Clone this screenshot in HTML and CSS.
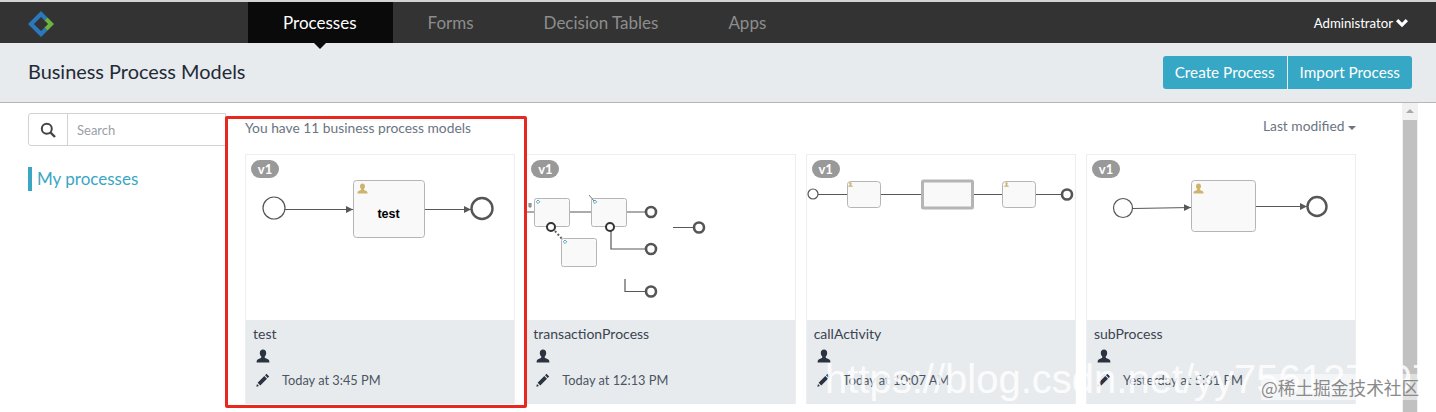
FILE: index.html
```html
<!DOCTYPE html>
<html lang="en">
<head>
    <meta charset="UTF-8">
    <meta name="viewport" content="width=device-width, initial-scale=1.0">
    <title>Business Process Models</title>
    <link rel="stylesheet" href="styles.css">
</head>
<body>

    <svg class="defs" width="0" height="0">
        <defs>
            <symbol id="person" viewBox="0 0 14 14">
                <path d="M7 .6c2 0 3.2 1.5 3.2 3.5 0 1.400-.6 2.700-1.400 3.500-.3.4-.2 1 .3 1.300 1.500.7 3.300 1.200 3.900 2.300.3.600.4 1.300.4 2.200H.6c0-.9.1-1.600.4-2.200.6-1.100 2.400-1.600 3.900-2.300.5-.3.6-.9.3-1.300C4.400 6.800 3.800 5.500 3.800 4.100 3.800 2.100 5 .6 7 .6z"/>
            </symbol>
            <symbol id="pencil" viewBox="0 0 14 14">
                <path d="M10.500.8l2.700 2.700-1.500 1.500L9 2.300zM8.300 3l2.700 2.700-6.700 6.700-2.700-2.700zM1 11l2 2-2.700.7z"/>
            </symbol>
            <marker id="arrow" markerWidth="8" markerHeight="8" refX="7" refY="4" orient="auto" markerUnits="userSpaceOnUse">
                <path d="M0 .5L7 4 0 7.500z" fill="#585858"/>
            </marker>
        </defs>
    </svg>

    <nav class="navbar">
        <svg class="logo" width="26" height="26" viewBox="3 3 22 22">
            <path d="M14 3L3 14l11 11 5.500-5.500-2.500-2.500-3 3-6-6 6-6 3 3 2.500-2.500z" fill="#2b78bd"/>
            <path d="M19.500 8.500l-2.500 2.500 3 3-3 3 2.500 2.500 5.500-5.500z" fill="#6cb33f"/>
        </svg>
        <ul class="nav-list">
            <li class="nav-item active">Processes</li>
            <li class="nav-item">Forms</li>
            <li class="nav-item">Decision Tables</li>
            <li class="nav-item">Apps</li>
        </ul>
        <div class="user-menu">
            Administrator
            <svg width="12" height="10" viewBox="0 0 12 10"><path d="M0 3.200L2.300 1 6 4.700 9.700 1 12 3.200 6 9.200z" fill="#fff"/></svg>
        </div>
    </nav>

    <header class="subheader">
        <h1>Business Process Models</h1>
        <div class="btn-group">
            <button class="btn">Create Process</button>
            <button class="btn">Import Process</button>
        </div>
    </header>

    <div class="content">
        <aside class="sidebar">
            <div class="search-box">
                <span class="search-icon">
                    <svg width="16" height="16" viewBox="0 0 16 16"><circle cx="6.800" cy="6.800" r="5" fill="none" stroke="#444" stroke-width="2"/><path d="M10.500 10.500L15 15" stroke="#444" stroke-width="2.400"/></svg>
                </span>
                <input type="text" placeholder="Search">
            </div>
            <div class="side-link">My processes</div>
        </aside>

        <main class="main">
            <div class="toolbar">
                <span class="count">You have 11 business process models</span>
                <span class="sort">Last modified <i class="caret"></i></span>
            </div>
            <div class="cards">

                <div class="card">
                    <span class="badge">v1</span>
                    <svg class="thumb" viewBox="246 155 269 165">
                        <circle class="start" cx="274" cy="208" r="11"/>
                        <path class="flow" d="M285 209.500H353" marker-end="url(#arrow)"/>
                        <rect class="task" x="353.500" y="180.500" width="71" height="57" rx="3"/>
                        <use href="#person" class="task-user" x="357" y="183" width="11" height="11"/>
                        <text class="task-label" x="388.500" y="218">test</text>
                        <path class="flow" d="M425 209.500H471" marker-end="url(#arrow)"/>
                        <circle class="end" cx="482" cy="208.500" r="10.500"/>
                    </svg>
                    <div class="card-info">
                        <div class="card-name">test</div>
                        <svg class="info-icon"><use href="#person"/></svg>
                        <div class="card-date">
                            <svg class="info-icon"><use href="#pencil"/></svg>
                            <span>Today at 3:45 PM</span>
                        </div>
                    </div>
                </div>

                <div class="card">
                    <span class="badge">v1</span>
                    <svg class="thumb" viewBox="526 155 269 165">
                        <path class="flow" d="M526 212H534M570 212H592M627 212H646M611 228V249H646M673 227.500H694M625 279V291.500H646"/>
                        <path class="dots" d="M555 231L563 240"/>
                        <rect class="task" x="534.500" y="198.500" width="35" height="28" rx="2"/>
                        <rect class="task" x="591.500" y="198.500" width="35" height="28" rx="2"/>
                        <rect class="task" x="561.500" y="238.500" width="35" height="28" rx="2"/>
                        <path class="gear" d="M538 200l1.800 1.800-1.800 1.800-1.800-1.800zM595 200l1.800 1.800-1.800 1.800-1.800-1.800zM565 240l1.800 1.800-1.800 1.800-1.800-1.800z"/>
                        <path class="mark" d="M589 195l5 6M528 204h4M528 206h4M530 203v5"/>
                        <circle class="boundary" cx="551" cy="227" r="4"/>
                        <circle class="boundary" cx="610" cy="227" r="4"/>
                        <circle class="end small" cx="651" cy="212" r="5"/>
                        <circle class="end small" cx="651" cy="249" r="5"/>
                        <circle class="end small" cx="651" cy="291.500" r="5"/>
                        <circle class="end small" cx="699" cy="227.500" r="5"/>
                    </svg>
                    <div class="card-info">
                        <div class="card-name">transactionProcess</div>
                        <svg class="info-icon"><use href="#person"/></svg>
                        <div class="card-date">
                            <svg class="info-icon"><use href="#pencil"/></svg>
                            <span>Today at 12:13 PM</span>
                        </div>
                    </div>
                </div>

                <div class="card">
                    <span class="badge">v1</span>
                    <svg class="thumb" viewBox="806 155 269 165">
                        <circle class="start" cx="812" cy="194" r="5"/>
                        <path class="flow" d="M817 194.500H846M880 194.500H921M972 194.500H1001M1035 194.500H1061"/>
                        <rect class="task" x="846.500" y="181.500" width="33" height="26" rx="3"/>
                        <rect class="task thick" x="921.500" y="181" width="50" height="27" rx="1"/>
                        <rect class="task" x="1001.500" y="181.500" width="33" height="26" rx="3"/>
                        <use href="#person" class="task-user" x="847" y="182" width="5" height="5"/>
                        <use href="#person" class="task-user" x="1003" y="182" width="5" height="5"/>
                        <circle class="end small" cx="1066" cy="194.500" r="5"/>
                    </svg>
                    <div class="card-info">
                        <div class="card-name">callActivity</div>
                        <svg class="info-icon"><use href="#person"/></svg>
                        <div class="card-date">
                            <svg class="info-icon"><use href="#pencil"/></svg>
                            <span>Today at 10:07 AM</span>
                        </div>
                    </div>
                </div>

                <div class="card">
                    <span class="badge">v1</span>
                    <svg class="thumb" viewBox="1086 155 269 165">
                        <circle class="start" cx="1122" cy="208" r="9.500"/>
                        <path class="flow" d="M1132 208.500L1190 207.500" marker-end="url(#arrow)"/>
                        <rect class="task" x="1190.500" y="180.500" width="64" height="51" rx="3"/>
                        <use href="#person" class="task-user" x="1192" y="183" width="11" height="11"/>
                        <path class="flow" d="M1255 206.500H1306" marker-end="url(#arrow)"/>
                        <circle class="end" cx="1316" cy="206.500" r="9.500"/>
                    </svg>
                    <div class="card-info">
                        <div class="card-name">subProcess</div>
                        <svg class="info-icon"><use href="#person"/></svg>
                        <div class="card-date">
                            <svg class="info-icon"><use href="#pencil"/></svg>
                            <span>Yesterday at 5:31 PM</span>
                        </div>
                    </div>
                </div>

            </div>
        </main>

        <div class="scrollbar">
            <i class="scroll-up"></i>
            <div class="scroll-thumb"></div>
        </div>
    </div>

    <!-- annotation and watermarks lying over the screenshot -->
    <div class="red-box"></div>
    <div class="watermark">https://blog.csdn.net/yy756127197</div>
    <div class="watermark-cn">@稀土掘金技术社区</div>

</body>
</html>
```

FILE: styles.css
```css
html, body {
    height: 412px;
    overflow: hidden;
}
body {
    font-family: Lato, "Noto Sans", sans-serif;
    margin: 0;
    padding: 0;
    background-color: #fff;
    color: #3a4450;
    position: relative;
}
.defs {
    position: absolute;
}
.navbar {
    display: flex;
    align-items: center;
    height: 41px;
    border-top: 2px solid #d4d4d4;
    background-color: #333;
}
.logo {
    margin: 3px 194px 0 28px;
}
.nav-list {
    display: flex;
    margin: 0;
    padding: 0;
    list-style: none;
}
.nav-item {
    position: relative;
    padding: 0 35px;
    line-height: 41px;
    font-size: 17px;
    color: #8d8d8d;
}
.nav-item.active {
    padding-right: 36px;
    background-color: #0a0a0a;
    color: #fff;
}
.nav-item.active::after {
    content: "";
    position: absolute;
    left: 50%;
    top: 100%;
    margin-left: -6px;
    border: 6px solid transparent;
    border-bottom: 0;
    border-top-color: #0a0a0a;
}
.user-menu {
    margin-left: auto;
    margin-right: 28px;
    display: flex;
    align-items: center;
    gap: 3px;
    font-size: 13.2px;
    color: #fff;
}
.subheader {
    display: flex;
    align-items: center;
    justify-content: space-between;
    box-sizing: border-box;
    height: 60px;
    padding: 0 24px 1px 28px;
    background-color: #e8ebee;
    border-bottom: 1px solid #b4b7ba;
}
h1 {
    margin: 0 0 2px;
    font-size: 19.9px;
    font-weight: 400;
    color: #1f2a36;
}
.btn-group {
    display: flex;
    gap: 1px;
}
.btn {
    height: 33px;
    padding: 0 12px;
    border: none;
    background-color: #36a7c4;
    color: #fff;
    font-family: inherit;
    font-size: 15.3px;
}
.btn:first-child {
    border-radius: 3px 0 0 3px;
}
.btn:last-child {
    border-radius: 0 3px 3px 0;
}
.content {
    display: flex;
}
.sidebar {
    box-sizing: border-box;
    width: 245px;
    padding: 10px 19px 0 28px;
}
.search-box {
    display: flex;
    height: 33px;
    box-sizing: border-box;
    border: 1px solid #d0d3d6;
    border-radius: 3px 0 0 3px;
}
.search-icon {
    display: flex;
    align-items: center;
    justify-content: center;
    flex: 0 0 38px;
    border-right: 1px solid #d0d3d6;
}
.search-box input {
    width: 100%;
    min-width: 0;
    padding: 0 9px;
    border: none;
    outline: none;
    font-family: inherit;
    font-size: 13px;
}
.search-box input::placeholder {
    color: #9a9fa5;
}
.side-link {
    margin-top: 21px;
    padding-left: 5px;
    border-left: 4px solid #3ba6c4;
    line-height: 24px;
    font-size: 17px;
    color: #3ba6c4;
}
.main {
    width: 1111px;
    padding-top: 15px;
}
.toolbar {
    display: flex;
    justify-content: space-between;
    align-items: flex-start;
    height: 36px;
    font-size: 13.8px;
    color: #6b7580;
}
.count {
    line-height: 20px;
}
.sort {
    line-height: 16px;
}
.caret {
    display: inline-block;
    vertical-align: middle;
    border: 4px solid transparent;
    border-bottom: 0;
    border-top-color: #6b7580;
}
.cards {
    display: flex;
    gap: 10px;
}
.card {
    position: relative;
    box-sizing: border-box;
    width: 270.33px;
    height: 250px;
    border: 1px solid #eceef0;
    border-bottom: 0;
}
.badge {
    position: absolute;
    left: 5px;
    top: 5px;
    width: 28px;
    height: 18px;
    border-radius: 9px;
    background-color: #999;
    color: #fff;
    font-size: 13px;
    font-weight: 700;
    line-height: 18px;
    text-align: center;
}
.thumb {
    display: block;
    width: 269px;
    height: 165px;
}
.start {
    fill: #fff;
    stroke: #555;
    stroke-width: 1.2;
}
.end {
    fill: #fff;
    stroke: #555;
    stroke-width: 2.4;
}
.end.small {
    stroke-width: 2.6;
}
.boundary {
    fill: #fff;
    stroke: #333;
    stroke-width: 2;
}
.flow {
    fill: none;
    stroke: #585858;
    stroke-width: 1.2;
}
.dots {
    stroke: #666;
    stroke-width: 2;
    stroke-dasharray: 2 2;
}
.mark {
    fill: none;
    stroke: #555;
    stroke-width: .8;
}
.gear {
    fill: none;
    stroke: #5fa6c8;
}
.task {
    fill: #f9f9f9;
    stroke: #b5b5b5;
}
.task.thick {
    stroke-width: 3;
}
.task-user {
    fill: #cdb36c;
}
.task-label {
    font-family: "Liberation Sans", Arial, sans-serif;
    font-size: 12.5px;
    font-weight: 700;
    text-anchor: middle;
    fill: #000;
}
.card-info {
    height: 84px;
    box-sizing: border-box;
    padding: 5px 7px 0;
    background-color: #e8ebee;
}
.card-name {
    line-height: 17px;
    font-size: 14px;
    color: #3a4450;
}
.info-icon {
    display: block;
    flex: none;
    width: 14px;
    height: 14px;
    margin: 7px 0 0 3px;
    fill: #2b3340;
}
.card-date {
    display: flex;
    align-items: center;
    gap: 12px;
    margin-top: 7px;
    font-size: 12.8px;
    color: #4a5562;
}
.card-date .info-icon {
    margin-top: 0;
}
.card-date span {
    line-height: 20px;
}
.scrollbar {
    position: relative;
    flex: none;
    box-sizing: border-box;
    width: 16px;
    height: 309px;
    margin-left: 46px;
    padding: 17px 1px 0;
    background-color: #f1f1f1;
}
.scroll-up {
    position: absolute;
    left: 4px;
    top: 6px;
    border: 4px solid transparent;
    border-top: 0;
    border-bottom-color: #a8a8a8;
}
.scroll-thumb {
    height: 100%;
    background-color: #c1c1c1;
}
.red-box {
    position: absolute;
    left: 225px;
    top: 116px;
    width: 296px;
    height: 286px;
    border: 3px solid #e8281e;
    border-radius: 2px;
}
.watermark {
    position: absolute;
    left: 825px;
    top: 357px;
    font-family: "Liberation Sans", Arial, sans-serif;
    font-size: 40px;
    white-space: nowrap;
    color: rgba(255, 255, 255, 0.85);
}
.watermark-cn {
    position: absolute;
    left: 1261px;
    top: 374px;
    font-family: "Noto Sans CJK SC", sans-serif;
    font-size: 17.7px;
    white-space: nowrap;
    color: #8a8a8a;
    background-color: rgba(255, 255, 255, 0.5);
}
```
